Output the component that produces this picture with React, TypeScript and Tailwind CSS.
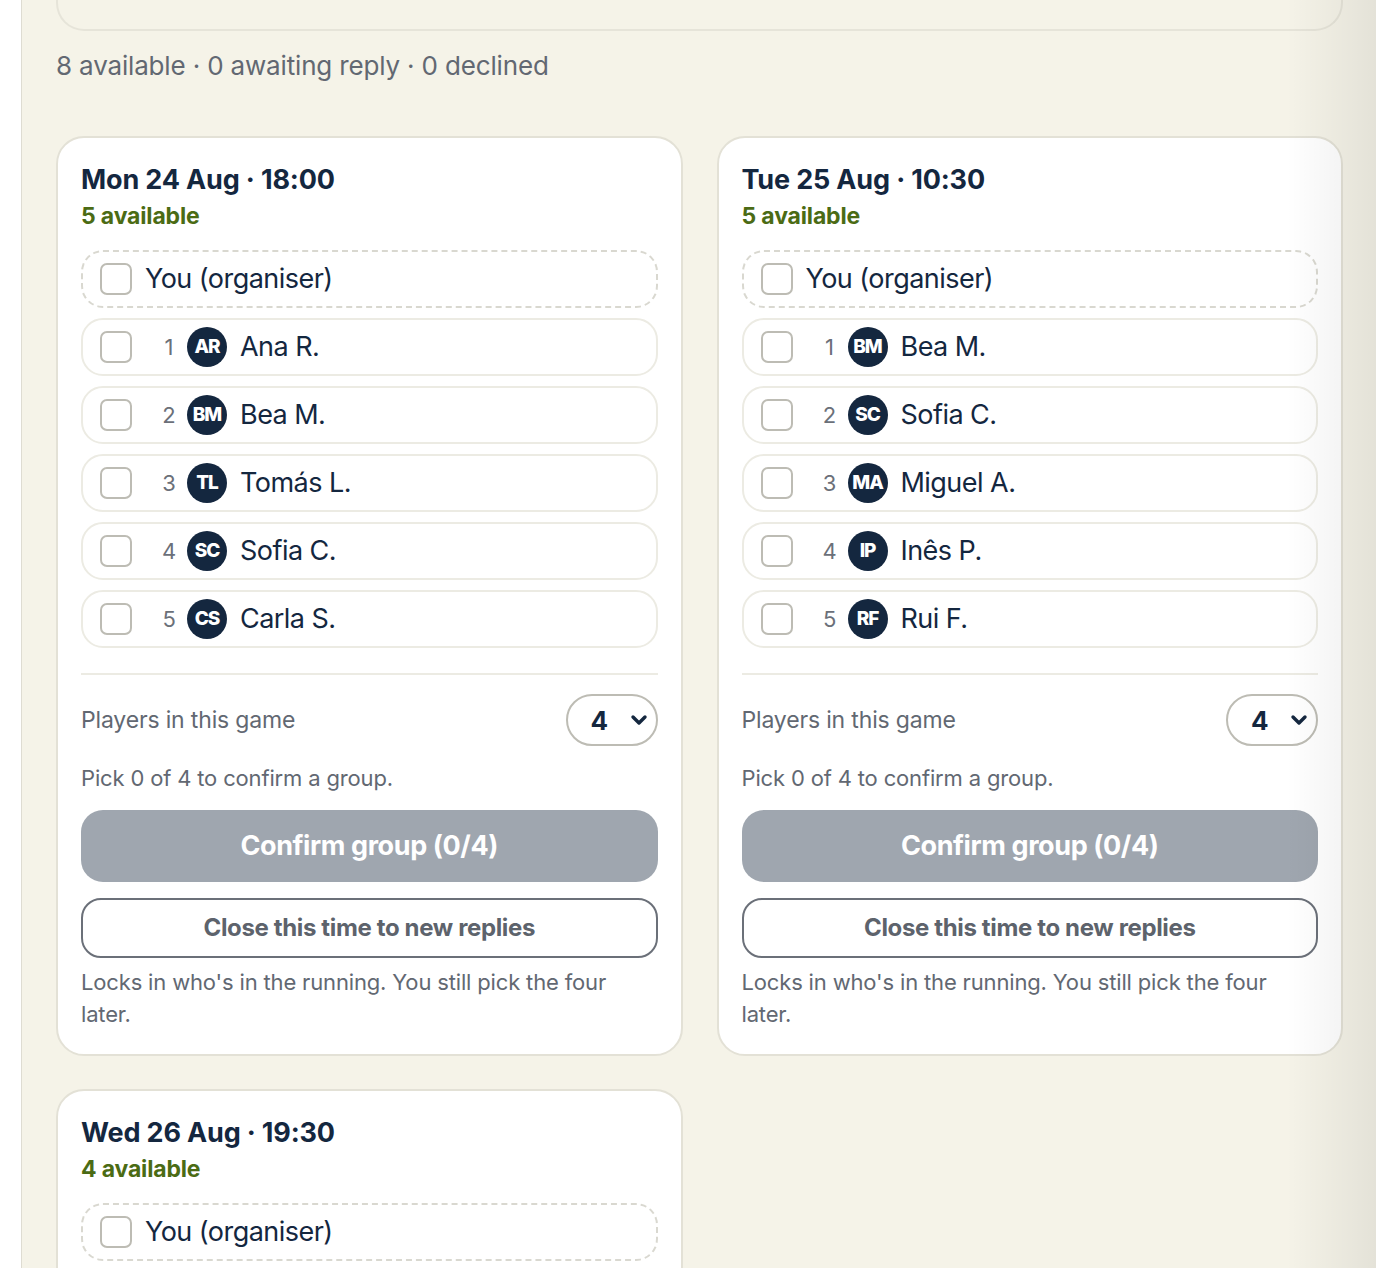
import { ChevronDown } from "lucide-react";

type Player = { name: string; initials: string };
type Slot = { label: string; players: Player[] };

const SLOTS: Slot[] = [
  {
    label: "Mon 24 Aug · 18:00",
    players: [
      { name: "Ana R.", initials: "AR" },
      { name: "Bea M.", initials: "BM" },
      { name: "Tomás L.", initials: "TL" },
      { name: "Sofia C.", initials: "SC" },
      { name: "Carla S.", initials: "CS" },
    ],
  },
  {
    label: "Tue 25 Aug · 10:30",
    players: [
      { name: "Bea M.", initials: "BM" },
      { name: "Sofia C.", initials: "SC" },
      { name: "Miguel A.", initials: "MA" },
      { name: "Inês P.", initials: "IP" },
      { name: "Rui F.", initials: "RF" },
    ],
  },
  {
    label: "Wed 26 Aug · 19:30",
    players: [
      { name: "Ana R.", initials: "AR" },
      { name: "Tomás L.", initials: "TL" },
      { name: "Miguel A.", initials: "MA" },
      { name: "Rui F.", initials: "RF" },
    ],
  },
];

function Checkbox() {
  return <span className="h-8 w-8 shrink-0 rounded-[7px] border-2 border-[#bdbcb4] bg-white" />;
}

function PlayerRow({ index, player }: { index: number; player: Player }) {
  return (
    <label className="flex h-[58px] items-center rounded-[22px] border-2 border-[#ecebe3] pl-[17px]">
      <Checkbox />
      <span className="ml-[29px] w-4 text-center text-[22px] text-[#6b7079]">{index}</span>
      <span className="ml-[10px] flex h-10 w-10 items-center justify-center rounded-full bg-[#14273f] text-[19px] font-extrabold tracking-[-0.06em] text-white">
        {player.initials}
      </span>
      <span className="ml-[13px] text-[27px] tracking-[-0.02em] text-[#14273f]">{player.name}</span>
    </label>
  );
}

function SlotCard({ slot }: { slot: Slot }) {
  return (
    <section className="rounded-[28px] border-2 border-[#e3e1d6] bg-white px-[23px] pt-[26px] pb-[24px]">
      <h2 className="text-[27px] leading-8 font-bold text-[#14273f]">{slot.label}</h2>
      <p className="mt-[6px] text-[23px] leading-7 font-bold text-[#4b6b14]">
        {slot.players.length} available
      </p>

      <div className="mt-5 flex flex-col gap-[10px]">
        <label className="flex h-[58px] items-center rounded-[22px] border-2 border-dashed border-[#d9d8d0] pl-[17px]">
          <Checkbox />
          <span className="ml-[13px] text-[27px] tracking-[-0.02em] text-[#14273f]">You (organiser)</span>
        </label>
        {slot.players.map((p, i) => (
          <PlayerRow key={p.initials} index={i + 1} player={p} />
        ))}
      </div>

      <div className="mt-[25px] border-t-2 border-[#ecebe3]" />

      <div className="mt-[19px] flex items-center justify-between">
        <span className="text-[23px] text-[#626872]">Players in this game</span>
        <div className="flex h-[52px] w-[92px] items-center justify-between rounded-full border-2 border-[#bdbcb4] pr-[5px] pl-[23px]">
          <span className="text-[26px] font-bold text-[#14273f]">4</span>
          <ChevronDown className="h-6 w-6 text-[#14273f]" strokeWidth={3.4} />
        </div>
      </div>

      <p className="mt-[18px] text-[22px] leading-7 text-[#626872]">Pick 0 of 4 to confirm a group.</p>

      <button
        type="button"
        disabled
        className="mt-[18px] flex h-[72px] w-full items-center justify-center rounded-[22px] bg-[#9fa6af] text-[27px] font-bold tracking-[-0.015em] text-white"
      >
        Confirm group (0/4)
      </button>

      <button
        type="button"
        className="mt-4 flex h-[60px] w-full items-center justify-center rounded-[20px] border-2 border-[#6b7079] text-[24px] font-bold tracking-[-0.015em] text-[#5d636c]"
      >
        Close this time to new replies
      </button>

      <p className="mt-2 text-[22px] leading-8 text-[#626872]">
        Locks in who's in the running. You still pick the four later.
      </p>
    </section>
  );
}

export default function App() {
  return (
    <div className="relative flex h-[1268px] w-full overflow-hidden font-['Inter',sans-serif] tracking-[-0.01em]">
      <div className="w-[22px] shrink-0 border-r-[1.5px] border-[#dedcd2] bg-white" />
      <main className="flex-1 bg-[#f5f3e8] pr-[33px] pl-[34px]">
        <div className="h-[31px] rounded-b-[28px] border-2 border-t-0 border-[#e6e4d9]" />

        <p className="mt-[17px] text-[26px] leading-9 text-[#626872]">
          8 available · 0 awaiting reply · 0 declined
        </p>

        <div className="mt-[52px] grid grid-cols-2 items-start gap-x-[34px] gap-y-[33px]">
          {SLOTS.map((s) => (
            <SlotCard key={s.label} slot={s} />
          ))}
        </div>
      </main>
      <div className="pointer-events-none absolute top-0 right-0 h-full w-[90px] bg-gradient-to-r from-transparent to-black/[0.07]" />
    </div>
  );
}
